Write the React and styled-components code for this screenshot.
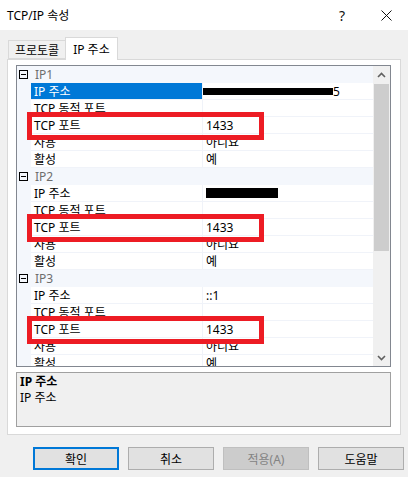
import React from 'react';
import styled, { createGlobalStyle } from 'styled-components';

const GlobalStyle = createGlobalStyle`
  html, body {
    margin: 0;
    padding: 0;
    background: #f0f0f0;
  }
  body {
    font-family: 'Noto Sans', 'Noto Sans CJK KR', sans-serif;
    font-size: 12px;
    color: #000;
  }
`;

const Dialog = styled.div`
  width: 408px;
  height: 477px;
  display: flex;
  flex-direction: column;
  background: #f0f0f0;
  overflow: hidden;
`;

const TitleBar = styled.div`
  height: 30px;
  flex: none;
  background: #fff;
  display: flex;
  align-items: center;
  padding-left: 7px;
`;

const Title = styled.div`
  flex: 1;
  font-size: 12px;
`;

const TitleButton = styled.div`
  width: 44px;
  height: 30px;
  display: flex;
  align-items: center;
  justify-content: center;
  font-size: 14px;
  color: #111;
`;

const Body = styled.div`
  padding: 7px 7px 0 7px;
`;

const TabStrip = styled.div`
  display: flex;
  align-items: flex-end;
  height: 22px;
  padding-left: 1px;
  position: relative;
  z-index: 1;
`;

const Tab = styled.div`
  height: ${(p) => (p.$active ? '23px' : '19px')};
  margin-bottom: ${(p) => (p.$active ? '-1px' : '0')};
  padding: 0 ${(p) => (p.$active ? '7px' : '6px')};
  display: flex;
  align-items: center;
  border: 1px solid #d9d9d9;
  border-bottom: ${(p) => (p.$active ? 'none' : '1px solid #d9d9d9')};
  border-right: ${(p) => (p.$active ? '1px solid #d9d9d9' : 'none')};
  background: ${(p) => (p.$active ? '#fff' : '#f0f0f0')};
  box-sizing: border-box;
  font-size: 12px;
`;

const Panel = styled.div`
  box-sizing: border-box;
  height: 376px;
  border: 1px solid #d9d9d9;
  background: #fff;
  padding: 5px 9px 7px 8px;
  display: flex;
  flex-direction: column;
  gap: 5px;
`;

const Grid = styled.div`
  box-sizing: border-box;
  height: 302px;
  border: 1px solid #828790;
  display: flex;
  background: #fff;
`;

const List = styled.div`
  flex: 1;
  position: relative;
  overflow: hidden;
`;

const CategoryRow = styled.div`
  height: 17px;
  display: flex;
  align-items: center;
  background: #f4f7fc;
  color: #6d6d6d;
`;

const Toggle = styled.div`
  box-sizing: border-box;
  width: 9px;
  height: 9px;
  margin: 0 7px 0 2px;
  border: 1px solid #000;
  position: relative;
  &::after {
    content: '';
    position: absolute;
    left: 1px;
    right: 1px;
    top: 3px;
    height: 1px;
    background: #000;
  }
`;

const Row = styled.div`
  height: 17px;
  display: grid;
  grid-template-columns: 14px 171px 1px 1fr;
  background: #fff;
`;

const Gutter = styled.div`
  background: #f4f7fc;
`;

const Cell = styled.div`
  box-sizing: border-box;
  padding-left: 3px;
  display: flex;
  align-items: center;
  white-space: nowrap;
  overflow: hidden;
  border-bottom: 1px solid #f0f3f9;
  background: ${(p) => (p.$selected ? '#0078d7' : '#fff')};
  color: ${(p) => (p.$selected ? '#fff' : '#000')};
`;

const Divider = styled.div`
  background: #f0f3f9;
`;

const Redact = styled.span`
  display: inline-block;
  width: ${(p) => p.$w}px;
  height: ${(p) => p.$h}px;
  background: #000;
  margin-left: ${(p) => p.$ml || 0}px;
`;

const Highlight = styled.div`
  position: absolute;
  left: 10px;
  width: 237px;
  height: 28px;
  box-sizing: border-box;
  border: 5px solid #ed1c24;
  pointer-events: none;
`;

const ScrollBar = styled.div`
  width: 17px;
  flex: none;
  background: #f0f0f0;
  display: flex;
  flex-direction: column;
`;

const ScrollArrow = styled.div`
  height: 17px;
  display: flex;
  align-items: center;
  justify-content: center;
`;

const Thumb = styled.div`
  height: 167px;
  margin: 1px 1px 0 1px;
  background: #cdcdcd;
`;

const ScrollSpace = styled.div`
  flex: 1;
`;

const Description = styled.div`
  box-sizing: border-box;
  height: 55px;
  border: 1px solid #a0a0a0;
  background: #f0f0f0;
  padding: 1px 3px;
  line-height: 16px;
`;

const DescTitle = styled.div`
  font-weight: bold;
`;

const ButtonRow = styled.div`
  display: flex;
  justify-content: flex-end;
  gap: 9px;
  margin-right: -3px;
  padding-top: 12px;
`;

const Button = styled.div`
  box-sizing: border-box;
  width: 86px;
  height: 23px;
  display: flex;
  align-items: center;
  justify-content: center;
  background: ${(p) => (p.$disabled ? '#cccccc' : '#e1e1e1')};
  color: ${(p) => (p.$disabled ? '#838383' : '#000')};
  border: ${(p) => (p.$primary ? '2px solid #0078d7' : '1px solid #adadad')};
  border-color: ${(p) => (p.$disabled ? '#bfbfbf' : undefined)};
`;

const Chevron = ({ down }) => (
  <svg width="9" height="6" viewBox="0 0 9 6">
    <path
      d={down ? 'M1 1 L4.5 4.5 L8 1' : 'M1 5 L4.5 1.5 L8 5'}
      fill="none"
      stroke="#606060"
      strokeWidth="1.6"
    />
  </svg>
);

const groups = [
  { name: 'IP1', address: 'ip1' },
  { name: 'IP2', address: 'ip2' },
  { name: 'IP3', address: 'ip3' },
];

const renderAddress = (kind) => {
  if (kind === 'ip1')
    return (
      <>
        <Redact $w={130} $h={7} $ml={-3} />
        <span>5</span>
      </>
    );
  if (kind === 'ip2') return <Redact $w={72} $h={10} />;
  return '::1';
};

export default function App() {
  return (
    <>
      <GlobalStyle />
      <Dialog>
        <TitleBar>
          <Title>TCP/IP 속성</Title>
          <TitleButton>?</TitleButton>
          <TitleButton>
            <svg width="11" height="11" viewBox="0 0 11 11">
              <path d="M0.5 0.5 L10.5 10.5 M10.5 0.5 L0.5 10.5" stroke="#111" strokeWidth="1" />
            </svg>
          </TitleButton>
        </TitleBar>
        <Body>
          <TabStrip>
            <Tab>프로토콜</Tab>
            <Tab $active>IP 주소</Tab>
          </TabStrip>
          <Panel>
            <Grid>
              <List>
                {groups.map((g, gi) => (
                  <React.Fragment key={g.name}>
                    <CategoryRow>
                      <Toggle />
                      {g.name}
                    </CategoryRow>
                    <Row>
                      <Gutter />
                      <Cell $selected={gi === 0}>IP 주소</Cell>
                      <Divider />
                      <Cell>{renderAddress(g.address)}</Cell>
                    </Row>
                    <Row>
                      <Gutter />
                      <Cell>TCP 동적 포트</Cell>
                      <Divider />
                      <Cell />
                    </Row>
                    <Row>
                      <Gutter />
                      <Cell>TCP 포트</Cell>
                      <Divider />
                      <Cell>1433</Cell>
                    </Row>
                    <Row>
                      <Gutter />
                      <Cell>사용</Cell>
                      <Divider />
                      <Cell>아니요</Cell>
                    </Row>
                    <Row>
                      <Gutter />
                      <Cell>활성</Cell>
                      <Divider />
                      <Cell>예</Cell>
                    </Row>
                  </React.Fragment>
                ))}
                {groups.map((g, gi) => (
                  <Highlight key={g.name} style={{ top: gi * 102 + 46 }} />
                ))}
              </List>
              <ScrollBar>
                <ScrollArrow>
                  <Chevron />
                </ScrollArrow>
                <Thumb />
                <ScrollSpace />
                <ScrollArrow>
                  <Chevron down />
                </ScrollArrow>
              </ScrollBar>
            </Grid>
            <Description>
              <DescTitle>IP 주소</DescTitle>
              <div>IP 주소</div>
            </Description>
          </Panel>
          <ButtonRow>
            <Button $primary>확인</Button>
            <Button>취소</Button>
            <Button $disabled>적용(A)</Button>
            <Button>도움말</Button>
          </ButtonRow>
        </Body>
      </Dialog>
    </>
  );
}
